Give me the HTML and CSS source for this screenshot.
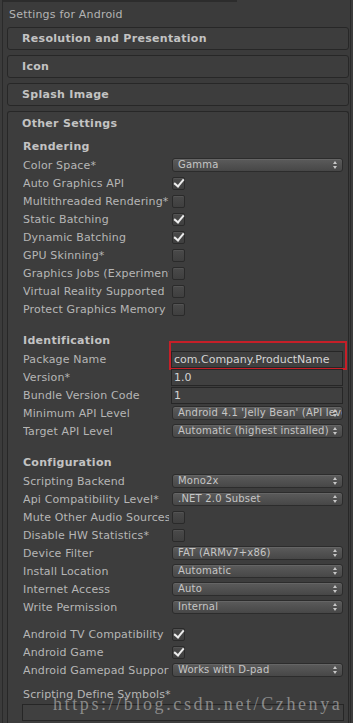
FILE: index.html
```html
<!DOCTYPE html>
<html>
<head>
<meta charset="utf-8">
<link rel="stylesheet" href="styles.css">
</head>
<body>
<div class="frame">
  <div class="topline"></div>
  <div class="title">Settings for Android</div>
  <div class="fold">Resolution and Presentation</div>
  <div class="fold">Icon</div>
  <div class="fold">Splash Image</div>
  <div class="panel">
    <div class="panel-head">Other Settings</div>
    <div class="panel-body">
      <div class="sub">Rendering</div>
      <div class="row"><span class="lbl">Color Space*</span><span class="dd">Gamma<i class="arr"></i></span></div>
      <div class="row"><span class="lbl">Auto Graphics API</span><span class="cb on"></span></div>
      <div class="row"><span class="lbl">Multithreaded Rendering*</span><span class="cb"></span></div>
      <div class="row"><span class="lbl">Static Batching</span><span class="cb on"></span></div>
      <div class="row"><span class="lbl">Dynamic Batching</span><span class="cb on"></span></div>
      <div class="row"><span class="lbl">GPU Skinning*</span><span class="cb"></span></div>
      <div class="row"><span class="lbl">Graphics Jobs (Experimental)*</span><span class="cb"></span></div>
      <div class="row"><span class="lbl">Virtual Reality Supported</span><span class="cb"></span></div>
      <div class="row"><span class="lbl">Protect Graphics Memory</span><span class="cb"></span></div>

      <div class="sub gap">Identification</div>
      <div class="row"><span class="lbl">Package Name</span><span class="tf">com.Company.ProductName</span><span class="redbox"></span></div>
      <div class="row"><span class="lbl">Version*</span><span class="tf">1.0</span></div>
      <div class="row"><span class="lbl">Bundle Version Code</span><span class="tf">1</span></div>
      <div class="row"><span class="lbl">Minimum API Level</span><span class="dd">Android 4.1 'Jelly Bean' (API level 16)<i class="arr"></i></span></div>
      <div class="row"><span class="lbl">Target API Level</span><span class="dd">Automatic (highest installed)<i class="arr"></i></span></div>

      <div class="sub gap">Configuration</div>
      <div class="row"><span class="lbl">Scripting Backend</span><span class="dd">Mono2x<i class="arr"></i></span></div>
      <div class="row"><span class="lbl">Api Compatibility Level*</span><span class="dd">.NET 2.0 Subset<i class="arr"></i></span></div>
      <div class="row"><span class="lbl">Mute Other Audio Sources*</span><span class="cb"></span></div>
      <div class="row"><span class="lbl">Disable HW Statistics*</span><span class="cb"></span></div>
      <div class="row"><span class="lbl">Device Filter</span><span class="dd">FAT (ARMv7+x86)<i class="arr"></i></span></div>
      <div class="row"><span class="lbl">Install Location</span><span class="dd">Automatic<i class="arr"></i></span></div>
      <div class="row"><span class="lbl">Internet Access</span><span class="dd">Auto<i class="arr"></i></span></div>
      <div class="row"><span class="lbl">Write Permission</span><span class="dd">Internal<i class="arr"></i></span></div>

      <div class="row tv"><span class="lbl">Android TV Compatibility</span><span class="cb on"></span></div>
      <div class="row"><span class="lbl">Android Game</span><span class="cb on"></span></div>
      <div class="row"><span class="lbl">Android Gamepad Support Level</span><span class="dd">Works with D-pad<i class="arr"></i></span></div>

      <div class="row sym"><span class="lbl wide">Scripting Define Symbols*</span></div>
      <div class="tf full"></div>
    </div>
  </div>
</div>
<div class="watermark">https://blog.csdn.net/Czhenya</div>
</body>
</html>
```
FILE: styles.css
```css
html, body {
  margin: 0;
  padding: 0;
  height: 100%;
  overflow: hidden;
}
body {
  background: #3b3b3b;
  font-family: "DejaVu Sans", "Liberation Sans", sans-serif;
  font-size: 11px;
  color: #b6b6b6;
  position: relative;
}
.frame {
  margin: 0 2px;
  height: 100%;
  box-sizing: border-box;
  border-left: 1px solid #2a2a2a;
  border-right: 1px solid #2a2a2a;
  padding: 0 1px 0 4px;
  display: flex;
  flex-direction: column;
  overflow: hidden;
}
.topline {
  flex: none;
  height: 2px;
  width: 234px;
  margin-left: -4px;
  background: #2c2c2c;
}
.title {
  flex: none;
  height: 25px;
  line-height: 25px;
  margin-left: 2px;
  color: #b4b4b4;
  letter-spacing: 0.2px;
}
.fold {
  flex: none;
  height: 23px;
  box-sizing: border-box;
  border: 1px solid #272727;
  border-radius: 3px;
  margin-bottom: 5px;
  padding-left: 14px;
  display: flex;
  align-items: center;
  font-weight: bold;
  color: #c3c3c3;
  background: #3d3d3d;
  letter-spacing: 0.3px;
}
.panel {
  flex: 1;
  min-height: 0;
  border: 1px solid #272727;
  border-bottom: none;
  border-radius: 3px 3px 0 0;
  background: #3d3d3d;
}
.panel-head {
  height: 22px;
  display: flex;
  align-items: center;
  padding-left: 14px;
  font-weight: bold;
  color: #c3c3c3;
  letter-spacing: 0.3px;
}
.panel-body {
  padding: 2px 5px 0 15px;
}
.sub {
  height: 20px;
  display: flex;
  align-items: center;
  font-weight: bold;
  color: #c3c3c3;
  letter-spacing: 0.3px;
}
.sub.gap { margin-top: 12px; }
.row {
  height: 18px;
  display: flex;
  align-items: center;
  position: relative;
}
.row.tv { margin-top: 9px; }
.row.sym { margin-top: 6px; }
.lbl {
  width: 146px;
  margin-right: 3px;
  flex: none;
  overflow: hidden;
  white-space: nowrap;
  letter-spacing: 0.15px;
}
.lbl.wide { width: auto; }
.cb {
  width: 11px;
  height: 11px;
  border: 1px solid #2a2a2a;
  border-radius: 2px;
  background: linear-gradient(#4a4a4a, #3f3f3f);
  box-shadow: inset 0 1px 0 rgba(255,255,255,0.06);
  position: relative;
  margin-top: 1px;
}
.cb.on::after {
  content: "";
  position: absolute;
  left: 3px;
  top: -1px;
  width: 4px;
  height: 8px;
  border-right: 2.5px solid #ececec;
  border-bottom: 2.5px solid #ececec;
  transform: rotate(40deg);
}
.dd {
  width: 171px;
  height: 14px;
  box-sizing: border-box;
  border: 1px solid #2c2c2c;
  border-radius: 3px;
  background: linear-gradient(#5b5b5b, #474747);
  box-shadow: inset 0 1px 0 rgba(255,255,255,0.07);
  font-size: 10px;
  line-height: 12px;
  color: #c6c6c6;
  padding: 0 14px 0 5px;
  white-space: nowrap;
  overflow: hidden;
  position: relative;
  letter-spacing: 0.2px;
}
.arr {
  position: absolute;
  right: 4px;
  top: 2px;
  width: 5px;
  height: 8px;
}
.arr::before, .arr::after {
  content: "";
  position: absolute;
  left: 0;
  border-left: 2.5px solid transparent;
  border-right: 2.5px solid transparent;
}
.arr::before { top: 0; border-bottom: 3px solid #c8c8c8; }
.arr::after { top: 5px; border-top: 3px solid #c8c8c8; }
.tf {
  width: 173px;
  height: 17px;
  box-sizing: border-box;
  margin-left: -1px;
  border: 1px solid #262626;
  background: #404040;
  color: #d4d4d4;
  padding-left: 2px;
  line-height: 15px;
  white-space: nowrap;
  overflow: hidden;
}
.tf.full {
  width: 322px;
  margin-top: 1px;
}
.redbox {
  position: absolute;
  left: 146px;
  top: -9px;
  width: 178px;
  height: 29px;
  box-sizing: border-box;
  border: 2px solid #c61f28;
}
.watermark {
  position: absolute;
  left: 53px;
  top: 694px;
  font-family: "Liberation Serif", serif;
  font-size: 18px;
  letter-spacing: 2.6px;
  color: rgba(205,205,205,0.55);
  white-space: nowrap;
}
```
